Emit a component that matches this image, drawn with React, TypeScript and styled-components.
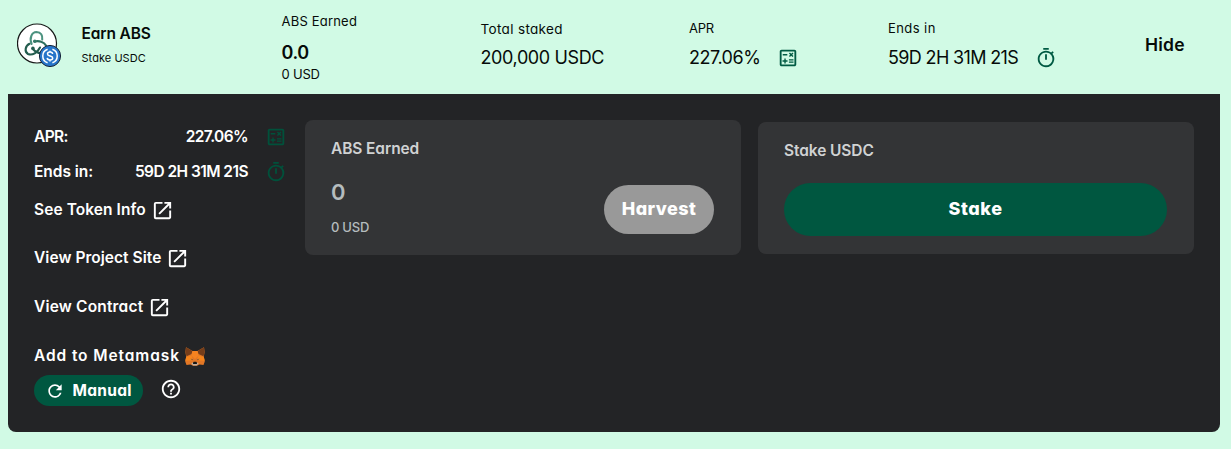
import React from "react";
import styled, { createGlobalStyle } from "styled-components";
import { MdHelpOutline, MdOpenInNew, MdOutlineCalculate, MdOutlineTimer, MdRefresh } from "react-icons/md";

const GlobalStyle = createGlobalStyle`
  * { box-sizing: border-box; }
  body {
    margin: 0;
    background: #d1fae5;
    color: #060b09;
    font-family: Inter, "Liberation Sans", sans-serif;
    font-feature-settings: "cv11";
  }
`;

const Page = styled.main`
  height: 449px;
  padding: 0 11px 0 8px;
  background: #d1fae5;
`;

const PoolRow = styled.header`
  display: grid;
  grid-template-columns: 64.5px 200px 199px 208.5px 199px 257px 1fr;
  height: 94px;
  padding-left: 9px;
`;

const Cell = styled.div<{ $top: number }>`
  display: flex;
  flex-direction: column;
  align-items: flex-start;
  padding-top: ${(p) => p.$top}px;
  white-space: nowrap;
`;

const Text = styled.span<{ $size: number; $line: number; $weight?: number; $spacing?: number }>`
  font-size: ${(p) => p.$size}px;
  line-height: ${(p) => p.$line}px;
  font-weight: ${(p) => p.$weight ?? 400};
  letter-spacing: ${(p) => p.$spacing ?? 0}px;
`;

const ValueRow = styled.div`
  display: flex;
  align-items: center;
  gap: 17px;
  svg { color: #005a43; }
`;

const TokenPair = styled.svg`
  display: block;
  width: 46px;
  height: 46px;
`;

const Panel = styled.section`
  display: flex;
  align-items: flex-start;
  height: 338px;
  padding: 26px 26px 0;
  border-radius: 0 0 8px 8px;
  background: #232426;
`;

const Details = styled.aside`
  width: 271px;
  color: #fff;
`;

const DetailText = styled.span<{ $spacing: number }>`
  font-size: 15.5px;
  line-height: 24px;
  font-weight: 600;
  letter-spacing: ${(p) => p.$spacing}px;
`;

const DetailValue = styled(DetailText)`
  text-align: right;
`;

const DetailLine = styled.div<{ $height: number }>`
  display: grid;
  grid-template-columns: auto 1fr 17px 22px;
  align-items: center;
  width: 253px;
  height: ${(p) => p.$height}px;
  white-space: nowrap;
  svg { color: #00513b; }
`;

const DetailLink = styled.a<{ $height: number }>`
  display: flex;
  align-items: center;
  gap: 5px;
  height: ${(p) => p.$height}px;
  color: #fff;
  white-space: nowrap;
`;

const TagRow = styled.div`
  display: flex;
  align-items: center;
  gap: 17px;
  height: 31px;
  margin-top: -9px;
`;

const ManualTag = styled.span`
  display: flex;
  align-items: center;
  gap: 7.5px;
  width: 109px;
  height: 31px;
  padding-left: 11px;
  border-radius: 16px;
  background: #005740;
`;

const ManualLabel = styled.span`
  font-size: 15.5px;
  line-height: 25px;
  font-weight: 700;
  letter-spacing: 0.3px;
`;

const HelpIcon = styled(MdHelpOutline)`
  margin-top: -4px;
`;

const Card = styled.article<{ $height: number }>`
  width: 436px;
  height: ${(p) => p.$height}px;
  padding: 17px 27px 0 26px;
  border-radius: 8px;
  background: #333436;
  color: #d0d2d3;
`;

const Cards = styled.div`
  display: flex;
  align-items: center;
  gap: 17px;
`;

const CardTitle = styled.h2`
  margin: 0;
  font-size: 15.5px;
  line-height: 24px;
  font-weight: 600;
  letter-spacing: -0.1px;
`;

const HarvestRow = styled.div`
  display: flex;
  justify-content: space-between;
  margin-top: 13px;
`;

const Earned = styled.div`
  display: flex;
  flex-direction: column;
  color: #b5bcbe;
`;

const Button = styled.button<{ $disabled?: boolean }>`
  width: ${(p) => (p.$disabled ? "110px" : "383px")};
  height: ${(p) => (p.$disabled ? 49 : 53)}px;
  margin-top: ${(p) => (p.$disabled ? 11 : 20)}px;
  padding: 0 0 2px;
  border: 0;
  border-radius: 27px;
  background: ${(p) => (p.$disabled ? "#999" : "#005740")};
  color: #fff;
  font: 800 18px/27px Inter, "Liberation Sans", sans-serif;
  font-feature-settings: "cv11";
  letter-spacing: ${(p) => (p.$disabled ? 0.4 : 0.6)}px;
`;

const Logo = () => (
  <TokenPair viewBox="0 0 46 46" fill="none">
    <circle cx="20" cy="21.5" r="19.5" fill="#fff" stroke="#161918" strokeWidth="1.2" />
    <g strokeWidth="2.1" strokeLinecap="round">
      <path d="M14.600 22C12.300 16 14.600 10.200 19.500 10c4.500 0 6.300 3.500 5.700 7.500" stroke="#4b927f" />
      <path d="M17.500 19.500c4.500-1.200 9.500.3 11.500 4" stroke="#2d705f" />
      <path d="M12.500 21.800C8 24 7.300 30 11 32c4.500 1.800 9.500-1.500 12-6.500" stroke="#235c4e" />
      <path d="M16 27c2.500 3 5.500 4.500 9 4" stroke="#235c4e" />
    </g>
    <circle cx="17.8" cy="19.3" r="1.8" fill="#347a68" />
    <circle cx="15.9" cy="26.4" r="1.8" fill="#235c4e" />
    <circle cx="33" cy="34" r="10.6" fill="#2775ca" stroke="#16243a" strokeWidth="1" />
    <g stroke="#fff" strokeWidth="1.5">
      <path d="M30.600 27.200a7.200 7.200 0 0 0 0 13.600M35.400 27.200a7.200 7.200 0 0 1 0 13.600" />
      <path d="M35.600 32c-.1-1.200-1.100-1.900-2.600-1.900s-2.500.7-2.500 1.800c0 2.700 5.200 1.300 5.200 4 0 1.200-1.100 2-2.700 2s-2.700-.8-2.800-2M33 28.700v1.500M33 37.900v1.500" />
    </g>
  </TokenPair>
);

const Fox = () => (
  <svg width="20" height="19" viewBox="0 0 20 19">
    <path d="M1 .3 7.500 4h5L19 .3 19.600 5l-.8 5 1 4.500-1.300 3.500-4-.5-2.500 1.200H8l-2.500-1.200-4 .5L.2 14.500 1.200 10 .4 5Z" fill="#e17726" />
    <path d="M1 .3 7.500 4 6.500 7 1.500 9.300.4 5ZM19 .3 12.500 4l1 3 5 2.300 1.100-4.300Z" fill="#763e1a" />
    <path d="M7.500 4 6.500 8.500 10 12l3.500-3.500-1-4.500Z" fill="#f58320" />
    <path d="m1.200 10 5.300-1.500L8 13l-3 .5-4.800.2ZM18.800 10l-5.300-1.500L12 13l3 .5 4.800.2Z" fill="#f6851b" />
    <path d="m5.500 11.600 2.200.9-.2.800ZM14.500 11.600l-2.200.9.2.800Z" fill="#233447" />
    <path d="m6.300 16.400 1.700-.9h4l1.700.9-1.900 2.200H8.200Z" fill="#c0ad9e" />
    <path d="m8.200 15.300.6-.5h2.400l.6.500.2 1.700H8Z" fill="#161616" />
  </svg>
);

export default function App() {
  return (
    <>
      <GlobalStyle />
      <Page>
        <PoolRow>
          <Cell $top={22}><Logo /></Cell>
          <Cell $top={22}>
            <Text $size={15.5} $line={24} $weight={600} $spacing={-0.15}>Earn ABS</Text>
            <Text $size={11} $line={24} $spacing={0.05}>Stake USDC</Text>
          </Cell>
          <Cell $top={11}>
            <Text $size={13} $line={20} $spacing={0.2}>ABS Earned</Text>
            <Text $size={18} $line={43} $weight={600} $spacing={-0.4}>0.0</Text>
            <Text $size={13} $line={0} $spacing={-0.2}>0 USD</Text>
          </Cell>
          <Cell $top={19}>
            <Text $size={13.5} $line={20} $spacing={0.34}>Total staked</Text>
            <Text $size={18} $line={37} $spacing={-0.39}>200,000 USDC</Text>
          </Cell>
          <Cell $top={18}>
            <Text $size={13} $line={20} $spacing={-0.3}>APR</Text>
            <ValueRow>
              <Text $size={18} $line={39} $spacing={-0.5}>227.06%</Text>
              <MdOutlineCalculate size={22} />
            </ValueRow>
          </Cell>
          <Cell $top={18}>
            <Text $size={13} $line={20} $spacing={0.42}>Ends in</Text>
            <ValueRow>
              <Text $size={18} $line={39} $spacing={-0.65}>59D 2H 31M 21S</Text>
              <MdOutlineTimer size={22} />
            </ValueRow>
          </Cell>
          <Cell $top={33}>
            <Text $size={17.5} $line={24} $weight={600} $spacing={0.2}>Hide</Text>
          </Cell>
        </PoolRow>
        <Panel>
          <Details>
            <DetailLine $height={34}>
              <DetailText $spacing={-0.65}>APR:</DetailText>
              <DetailValue $spacing={-0.6}>227.06%</DetailValue>
              <span />
              <MdOutlineCalculate size={22} />
            </DetailLine>
            <DetailLine $height={36}>
              <DetailText $spacing={-0.05}>Ends in:</DetailText>
              <DetailValue $spacing={-0.55}>59D 2H 31M 21S</DetailValue>
              <span />
              <MdOutlineTimer size={22} />
            </DetailLine>
            <DetailLink $height={40}>
              <DetailText $spacing={0.08}>See Token Info</DetailText>
              <MdOpenInNew size={23} />
            </DetailLink>
            <DetailLink $height={56}>
              <DetailText $spacing={0.04}>View Project Site</DetailText>
              <MdOpenInNew size={23} />
            </DetailLink>
            <DetailLink $height={42}>
              <DetailText $spacing={0.18}>View Contract</DetailText>
              <MdOpenInNew size={23} />
            </DetailLink>
            <DetailLink $height={56}>
              <DetailText $spacing={0.9}>Add to Metamask</DetailText>
              <Fox />
            </DetailLink>
            <TagRow>
              <ManualTag>
                <MdRefresh size={20} />
                <ManualLabel>Manual</ManualLabel>
              </ManualTag>
              <HelpIcon size={22} />
            </TagRow>
          </Details>
          <Cards>
            <Card $height={135}>
              <CardTitle>ABS Earned</CardTitle>
              <HarvestRow>
                <Earned>
                  <Text $size={22} $line={36} $weight={600}>0</Text>
                  <Text $size={13} $line={34} $weight={500} $spacing={-0.25}>0 USD</Text>
                </Earned>
                <Button $disabled>Harvest</Button>
              </HarvestRow>
            </Card>
            <Card $height={132}>
              <CardTitle>Stake USDC</CardTitle>
              <Button>Stake</Button>
            </Card>
          </Cards>
        </Panel>
      </Page>
    </>
  );
}
